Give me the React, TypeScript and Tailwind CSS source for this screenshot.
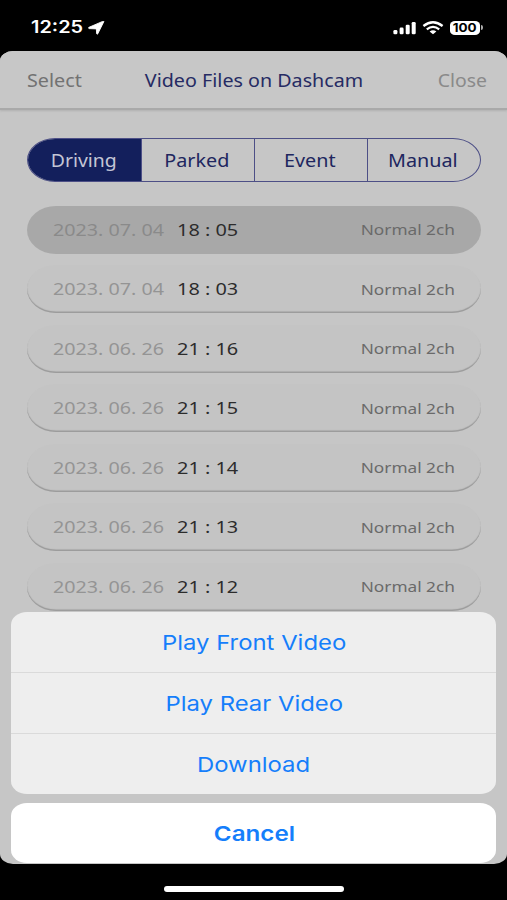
import { clsx } from 'clsx';

const tabs = ['Driving', 'Parked', 'Event', 'Manual'];

const files = [
    { date: '2023. 07. 04', time: '18 : 05' },
    { date: '2023. 07. 04', time: '18 : 03' },
    { date: '2023. 06. 26', time: '21 : 16' },
    { date: '2023. 06. 26', time: '21 : 15' },
    { date: '2023. 06. 26', time: '21 : 14' },
    { date: '2023. 06. 26', time: '21 : 13' },
    { date: '2023. 06. 26', time: '21 : 12' },
];

const actions = ['Play Front Video', 'Play Rear Video', 'Download'];

function StatusBar() {
    return (
        <div className="flex h-[51px] items-start justify-between pl-[31px] pr-[24px] pt-[18px] font-['Inter',sans-serif] text-white">
            <div className="flex h-[19px] items-center">
                <span className="w-[52px] origin-left scale-x-[1.17] whitespace-nowrap text-[17px] font-semibold leading-[19px]">12:25</span>
                <svg width="17" height="14" viewBox="0 0 17 14" className="ml-[5px]">
                    <path d="M15.8 0.7 9.7 12.9Q9.1 13.8 8.6 12.6L8.4 7.9 1.1 7.6Q-.2 7.2 1 6.3L14.7.4Q16.2-.1 15.8.7Z" fill="white" stroke="white" strokeWidth="0.9" />
                </svg>
            </div>
            <div className="flex h-[19px] items-center">
                <svg width="24" height="14" viewBox="0 0 24 14" fill="white">
                    <rect x="0.4" y="9" width="4" height="4.3" rx="1.3" />
                    <rect x="6.6" y="6.6" width="4" height="6.7" rx="1.3" />
                    <rect x="12.7" y="3.8" width="4" height="9.5" rx="1.3" />
                    <rect x="18.7" y="0.9" width="4" height="12.4" rx="1.3" />
                </svg>
                <svg width="22" height="14" viewBox="0 0 22 14" className="ml-[5px]" fill="none" stroke="white" strokeWidth="2.3">
                    <path d="M1.4 5Q11-2.6 20.6 5" />
                    <path d="M4.8 8.3Q11 3.4 17.2 8.3" />
                    <path d="M7.6 10.4Q11 8 14.4 10.4L11 13.3Z" fill="white" stroke="none" />
                </svg>
                <div className="ml-[6px] flex h-[14px] w-[30px] items-center justify-center rounded-[5px/4px] bg-white text-black">
                    <span className="scale-x-[1.12] text-[12px] font-bold leading-none">100</span>
                </div>
                <div className="ml-px h-[5px] w-[2px] rounded-r-full bg-[#aaaaaa]" />
            </div>
        </div>
    );
}

function Header() {
    return (
        <div className="grid h-[59px] shrink-0 grid-cols-[70px_1fr_70px] items-center border-b-2 border-[#a9a9a9] bg-[#c7c7c7] pl-[27px] pr-[20px] pt-[2px] text-[17.5px] shadow-[0_1px_2px_#b0b0b0]">
            <span className="origin-left scale-x-[1.13] text-[#727272]">Select</span>
            <span className="justify-self-center pr-[6px]">
                <span className="inline-block scale-x-[1.125] whitespace-nowrap text-[#262b63]">Video Files on Dashcam</span>
            </span>
            <span className="origin-right scale-x-[1.11] text-right text-[#8a8a8a]">Close</span>
        </div>
    );
}

function Tabs() {
    return (
        <div className="grid h-[44px] grid-cols-4 overflow-hidden rounded-[28px/22px] border border-[#4d4f86]">
            {tabs.map((tab, i) => (
                <button
                    key={tab}
                    className={clsx(
                        'flex items-center justify-center pr-[2px] text-[17.5px]',
                        i === 0 ? 'bg-[#131f5c] text-[#c3c5d5]' : 'border-l border-[#4d4f86] text-[#20265f]',
                    )}
                >
                    <span className={i === 0 ? 'scale-x-[1.11]' : 'scale-x-[1.13]'}>{tab}</span>
                </button>
            ))}
        </div>
    );
}

function FileRow({ date, time, selected }: { date: string; time: string; selected: boolean }) {
    return (
        <div
            className={clsx(
                'flex h-[48px] items-center rounded-[29px/24px] px-[26px]',
                selected ? 'bg-[#a8a8a8]' : 'bg-[#c4c4c4] shadow-[inset_0_-1.5px_1px_#9a9a9a]',
            )}
        >
            <span className={clsx('w-[124px] whitespace-nowrap text-[17px]', selected ? 'text-[#8a8a8a]' : 'text-[#949494]')}>
                <span className="inline-block origin-left scale-x-[1.16]">{date}</span>
            </span>
            <span className="origin-left scale-x-[1.17] whitespace-nowrap text-[17px] text-[#2c2c2c]">{time}</span>
            <span className="ml-auto origin-right scale-x-[1.15] whitespace-nowrap text-[15px] text-[#6a6a6a]">Normal 2ch</span>
        </div>
    );
}

function ActionSheet() {
    return (
        <div className="absolute inset-x-[11px] bottom-[1px] font-['Inter',sans-serif] text-[20.5px] text-[#157efb]">
            <div className="overflow-hidden rounded-[16px/13px] bg-[#eeeeee]">
                {actions.map((action, i) => (
                    <button
                        key={action}
                        className={clsx('flex w-full items-center justify-center pl-px pt-[2px]', i === 0 ? 'h-[60px]' : 'h-[61px] border-t border-[#dadada]')}
                    >
                        <span className="scale-x-[1.165]">{action}</span>
                    </button>
                ))}
            </div>
            <button className="mt-[9px] flex h-[60px] w-full items-center justify-center rounded-[16px/13px] bg-white pl-px pt-[2px] font-semibold">
                <span className="scale-x-[1.18]">Cancel</span>
            </button>
        </div>
    );
}

export default function App() {
    return (
        <div className="flex h-[900px] w-[507px] flex-col overflow-hidden bg-black font-['Noto_Sans',sans-serif]">
            <StatusBar />
            <div className="relative flex h-[813px] flex-col overflow-hidden rounded-[13px/10px] bg-[#c6c6c6]">
                <Header />
                <div className="pl-[27px] pr-[26px] pt-[28px]">
                    <Tabs />
                    <div className="mt-[23.5px] flex flex-col gap-[11.5px]">
                        {files.map((file, i) => (
                            <FileRow key={file.time} date={file.date} time={file.time} selected={i === 0} />
                        ))}
                    </div>
                </div>
                <ActionSheet />
            </div>
            {/* Home indicator */}
            <div className="ml-[164px] mt-[22px] h-[6px] w-[180px] rounded-full bg-white" />
        </div>
    );
}
